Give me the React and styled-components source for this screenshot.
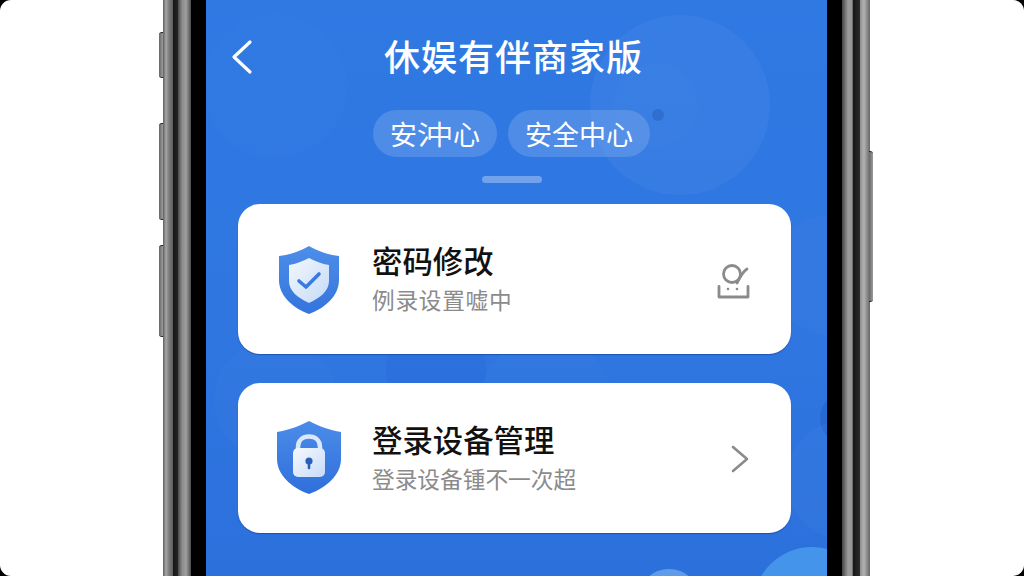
import React from "react";
import styled, { createGlobalStyle } from "styled-components";

const Global = createGlobalStyle`
  html, body { margin: 0; padding: 0; background: #000; }
  body { width: 1024px; height: 576px; overflow: hidden; font-family: "Noto Sans CJK SC", "Noto Sans", sans-serif; }
`;

const Stage = styled.div`
  width: 1024px;
  height: 576px;
  background: #fff;
  border-radius: 11px;
  overflow: hidden;
  display: flex;
  padding-left: 163px;
  box-sizing: border-box;
`;

const Phone = styled.div`
  position: relative;
  display: flex;
  height: 576px;
`;

const Bezel = styled.div`
  width: 43px;
  height: 100%;
  background: ${(p) =>
    p.$side === "left"
      ? `linear-gradient(to right, #5e5e5e 0, #a6a6a6 3px, #7c7c7c 6px, #5f5f5f 10px, #161616 10px, #242424 15px, #4a4a4a 15px, #8a8a8a 19px, #a0a0a0 23px, #4c4c4c 28px, #000 28px, #000 43px)`
      : `linear-gradient(to right, #000 0, #000 15px, #444 15px, #9a9a9a 21px, #969696 25px, #4a4a4a 26px, #161616 26px, #2b2b2b 33px, #8e8e8e 33px, #b2b2b2 37px, #666 43px)`};
`;

const SideButton = styled.div`
  position: absolute;
  top: ${(p) => p.$top}px;
  height: ${(p) => p.$height}px;
  width: 4px;
  box-sizing: border-box;
  ${(p) => (p.$side === "left" ? "left: -4px; border-radius: 3px 0 0 3px;" : "right: -3px; border-radius: 0 3px 3px 0;")}
  background: linear-gradient(to right, #666, #9c9c9c);
  border-top: 1px solid #222;
  border-bottom: 1px solid #222;
`;

const Screen = styled.main`
  position: relative;
  width: 621px;
  height: 576px;
  overflow: hidden;
  box-sizing: border-box;
  padding: 22px 36px 0 32px;
  display: flex;
  flex-direction: column;
  background: linear-gradient(180deg, #2f79e3 0%, #2f76e1 60%, #2c70dc 100%);
`;

const Blob = styled.div`
  position: absolute;
  left: ${(p) => p.$x - p.$r}px;
  top: ${(p) => p.$y - p.$r}px;
  width: ${(p) => p.$r * 2}px;
  height: ${(p) => p.$r * 2}px;
  border-radius: 50%;
  background: ${(p) => p.$color};
`;

const Header = styled.header`
  position: relative;
  display: grid;
  grid-template-columns: 1fr auto 1fr;
  align-items: center;
  height: 66px;
`;

const BackButton = styled.div`
  display: flex;
  margin-left: -9px;
  margin-top: 3px;
`;

const Title = styled.h1`
  margin: 0;
  font-size: 36px;
  font-weight: 500;
  letter-spacing: 1px;
  color: #fff;
  line-height: 1;
  white-space: nowrap;
  transform: translateX(-1px);
`;

const PillRow = styled.nav`
  position: relative;
  display: flex;
  justify-content: center;
  gap: 11px;
  margin-top: 22px;
  padding-right: 6px;
`;

const Pill = styled.div`
  height: 47px;
  padding: 0 17px;
  display: flex;
  align-items: center;
  border-radius: 24px;
  background: rgba(255, 255, 255, 0.15);
  color: #fff;
  font-size: 27px;
  line-height: 1;
  white-space: nowrap;
`;

const NarrowGlyph = styled.span`
  letter-spacing: -18px;
`;

const Indicator = styled.div`
  position: relative;
  width: 60px;
  height: 7px;
  margin: 19px auto 0;
  transform: translateX(-3px);
  border-radius: 4px;
  background: rgba(255, 255, 255, 0.32);
`;

const CardList = styled.section`
  position: relative;
  display: flex;
  flex-direction: column;
  gap: 29px;
  margin-top: 21px;
`;

const Card = styled.article`
  height: 150px;
  box-sizing: border-box;
  display: flex;
  align-items: center;
  padding: 0 41px 0 39px;
  border-radius: 22px;
  background: #fff;
  box-shadow: 0 1px 1px rgba(20, 60, 150, 0.6);
`;

const IconSlot = styled.div`
  width: 64px;
  flex: none;
  display: flex;
  justify-content: center;
  transform: translateY(${(p) => p.$shift}px);
`;

const CardText = styled.div`
  margin-left: 31px;
  flex: 1;
  display: flex;
  flex-direction: column;
  gap: 10px;
  transform: translateY(-1px);
`;

const CardTitle = styled.div`
  font-size: 30.400px;
  font-weight: 500;
  line-height: 34px;
  color: #111;
  white-space: nowrap;
`;

const CardSub = styled.div`
  font-size: 22.700px;
  letter-spacing: ${(p) => p.$track || 0}px;
  line-height: 26px;
  color: #8b8b8b;
  white-space: nowrap;
`;

const Trailing = styled.div`
  display: flex;
  justify-content: flex-end;
  transform: translateY(${(p) => p.$shift}px);
`;

function ShieldCheck() {
  return (
    <svg width="60" height="68" viewBox="0 0 60 68">
      <defs>
        <linearGradient id="sa" x1="0" y1="0" x2="0" y2="1">
          <stop offset="0" stopColor="#4d8eea" />
          <stop offset="1" stopColor="#3474dc" />
        </linearGradient>
        <linearGradient id="sb" x1="0" y1="0" x2="1" y2="1">
          <stop offset="0" stopColor="#f4f8fe" />
          <stop offset="1" stopColor="#c4d9f6" />
        </linearGradient>
      </defs>
      <path d="M30 0C38 5 50 9 60 10V34C60 50 46 62 30 68C14 62 0 50 0 34V10C10 9 22 5 30 0Z" fill="url(#sa)" />
      <path d="M30 12C36 15 43 18 50 19V35C50 45 41 52 30 57C19 52 10 45 10 35V19C17 18 24 15 30 12Z" fill="url(#sb)" />
      <path d="M20 35L27 41L40 28" fill="none" stroke="#3b7ae0" strokeWidth="3.600" strokeLinecap="round" strokeLinejoin="round" />
    </svg>
  );
}

function ShieldLock() {
  return (
    <svg width="64" height="73" viewBox="0 0 64 73">
      <defs>
        <linearGradient id="la" x1="0" y1="0" x2="0" y2="1">
          <stop offset="0" stopColor="#4b8ce9" />
          <stop offset="1" stopColor="#2f6fdb" />
        </linearGradient>
        <linearGradient id="lb" x1="0" y1="0" x2="1" y2="1">
          <stop offset="0" stopColor="#f6f9fe" />
          <stop offset="1" stopColor="#c6dbf7" />
        </linearGradient>
      </defs>
      <path d="M32 0C41 5 53 9 64 11V38C64 54 49 67 32 73C15 67 0 54 0 38V11C11 9 23 5 32 0Z" fill="url(#la)" />
      <path d="M21 28V26C21 19 26 15.500 32 15.500C38 15.500 43 19 43 26V28" fill="none" stroke="#dbe7fa" strokeWidth="4.500" />
      <rect x="16" y="27" width="32" height="29" rx="5" fill="url(#lb)" />
      <circle cx="32" cy="40" r="3.600" fill="#2b5fb8" />
      <path d="M32 40V47" stroke="#2b5fb8" strokeWidth="2.600" strokeLinecap="round" />
    </svg>
  );
}

function DeviceGlyph() {
  return (
    <svg width="33" height="35" viewBox="0 0 33 35" fill="none" stroke="#8b8b8b" strokeWidth="2.800" strokeLinecap="round" strokeLinejoin="round">
      <circle cx="15" cy="10" r="8.500" />
      <path d="M30 5C26 7.500 23 13 20 19" />
      <path d="M2 22.500V33H31V22.500" />
      <circle cx="11" cy="25" r="1.300" fill="#8b8b8b" stroke="none" />
      <circle cx="20" cy="25" r="1.300" fill="#8b8b8b" stroke="none" />
    </svg>
  );
}

export default function App() {
  return (
    <Stage>
      <Global />
      <Phone>
        <SideButton $side="left" $top={32} $height={46} />
        <SideButton $side="left" $top={123} $height={97} />
        <SideButton $side="left" $top={245} $height={92} />
        <SideButton $side="right" $top={151} $height={151} />
        <Bezel $side="left" />
        <Screen>
          <Blob $x={69} $y={86} $r={72} $color="rgba(255,255,255,0.012)" />
          <Blob $x={474} $y={105} $r={90} $color="rgba(255,255,255,0.045)" />
          <Blob $x={450} $y={105} $r={42} $color="rgba(255,255,255,0.012)" />
          <Blob $x={452} $y={115} $r={6} $color="#2f6fd2" />
          <Blob $x={70} $y={400} $r={62} $color="rgba(255,255,255,0.015)" />
          <Blob $x={230} $y={370} $r={50} $color="rgba(10,50,170,0.07)" />
          <Blob $x={340} $y={405} $r={68} $color="rgba(255,255,255,0.015)" />
          <Blob $x={640} $y={418} $r={26} $color="#2769d2" />
          <Blob $x={625} $y={275} $r={60} $color="rgba(255,255,255,0.02)" />
          <Blob $x={640} $y={480} $r={60} $color="rgba(255,255,255,0.025)" />
          <Blob $x={463} $y={600} $r={31} $color="#5e9cea" />
          <Blob $x={606} $y={606} $r={59} $color="#4394ea" />
          <Header>
            <BackButton>
              <svg width="24" height="36" viewBox="0 0 24 36" fill="none">
                <path d="M21 3L5 18L21 33" stroke="#fff" strokeWidth="3.200" strokeLinecap="round" strokeLinejoin="round" />
              </svg>
            </BackButton>
            <Title>休娱有伴商家版</Title>
            <span />
          </Header>
          <PillRow>
            <Pill>
              安<NarrowGlyph>氵</NarrowGlyph>中心
            </Pill>
            <Pill>安全中心</Pill>
          </PillRow>
          <Indicator />
          <CardList>
            <Card>
              <IconSlot $shift={1}>
                <ShieldCheck />
              </IconSlot>
              <CardText>
                <CardTitle>密码修改</CardTitle>
                <CardSub $track={0.7}>例录设置嘘中</CardSub>
              </CardText>
              <Trailing $shift={2}>
                <DeviceGlyph />
              </Trailing>
            </Card>
            <Card>
              <IconSlot $shift={-1}>
                <ShieldLock />
              </IconSlot>
              <CardText>
                <CardTitle>登录设备管理</CardTitle>
                <CardSub>登录设备锺不一次超</CardSub>
              </CardText>
              <Trailing $shift={1}>
                <svg width="20" height="28" viewBox="0 0 20 28" fill="none">
                  <path d="M3 2L17 14L3 26" stroke="#8b8b8b" strokeWidth="2.600" strokeLinecap="round" strokeLinejoin="round" />
                </svg>
              </Trailing>
            </Card>
          </CardList>
        </Screen>
        <Bezel $side="right" />
      </Phone>
    </Stage>
  );
}
